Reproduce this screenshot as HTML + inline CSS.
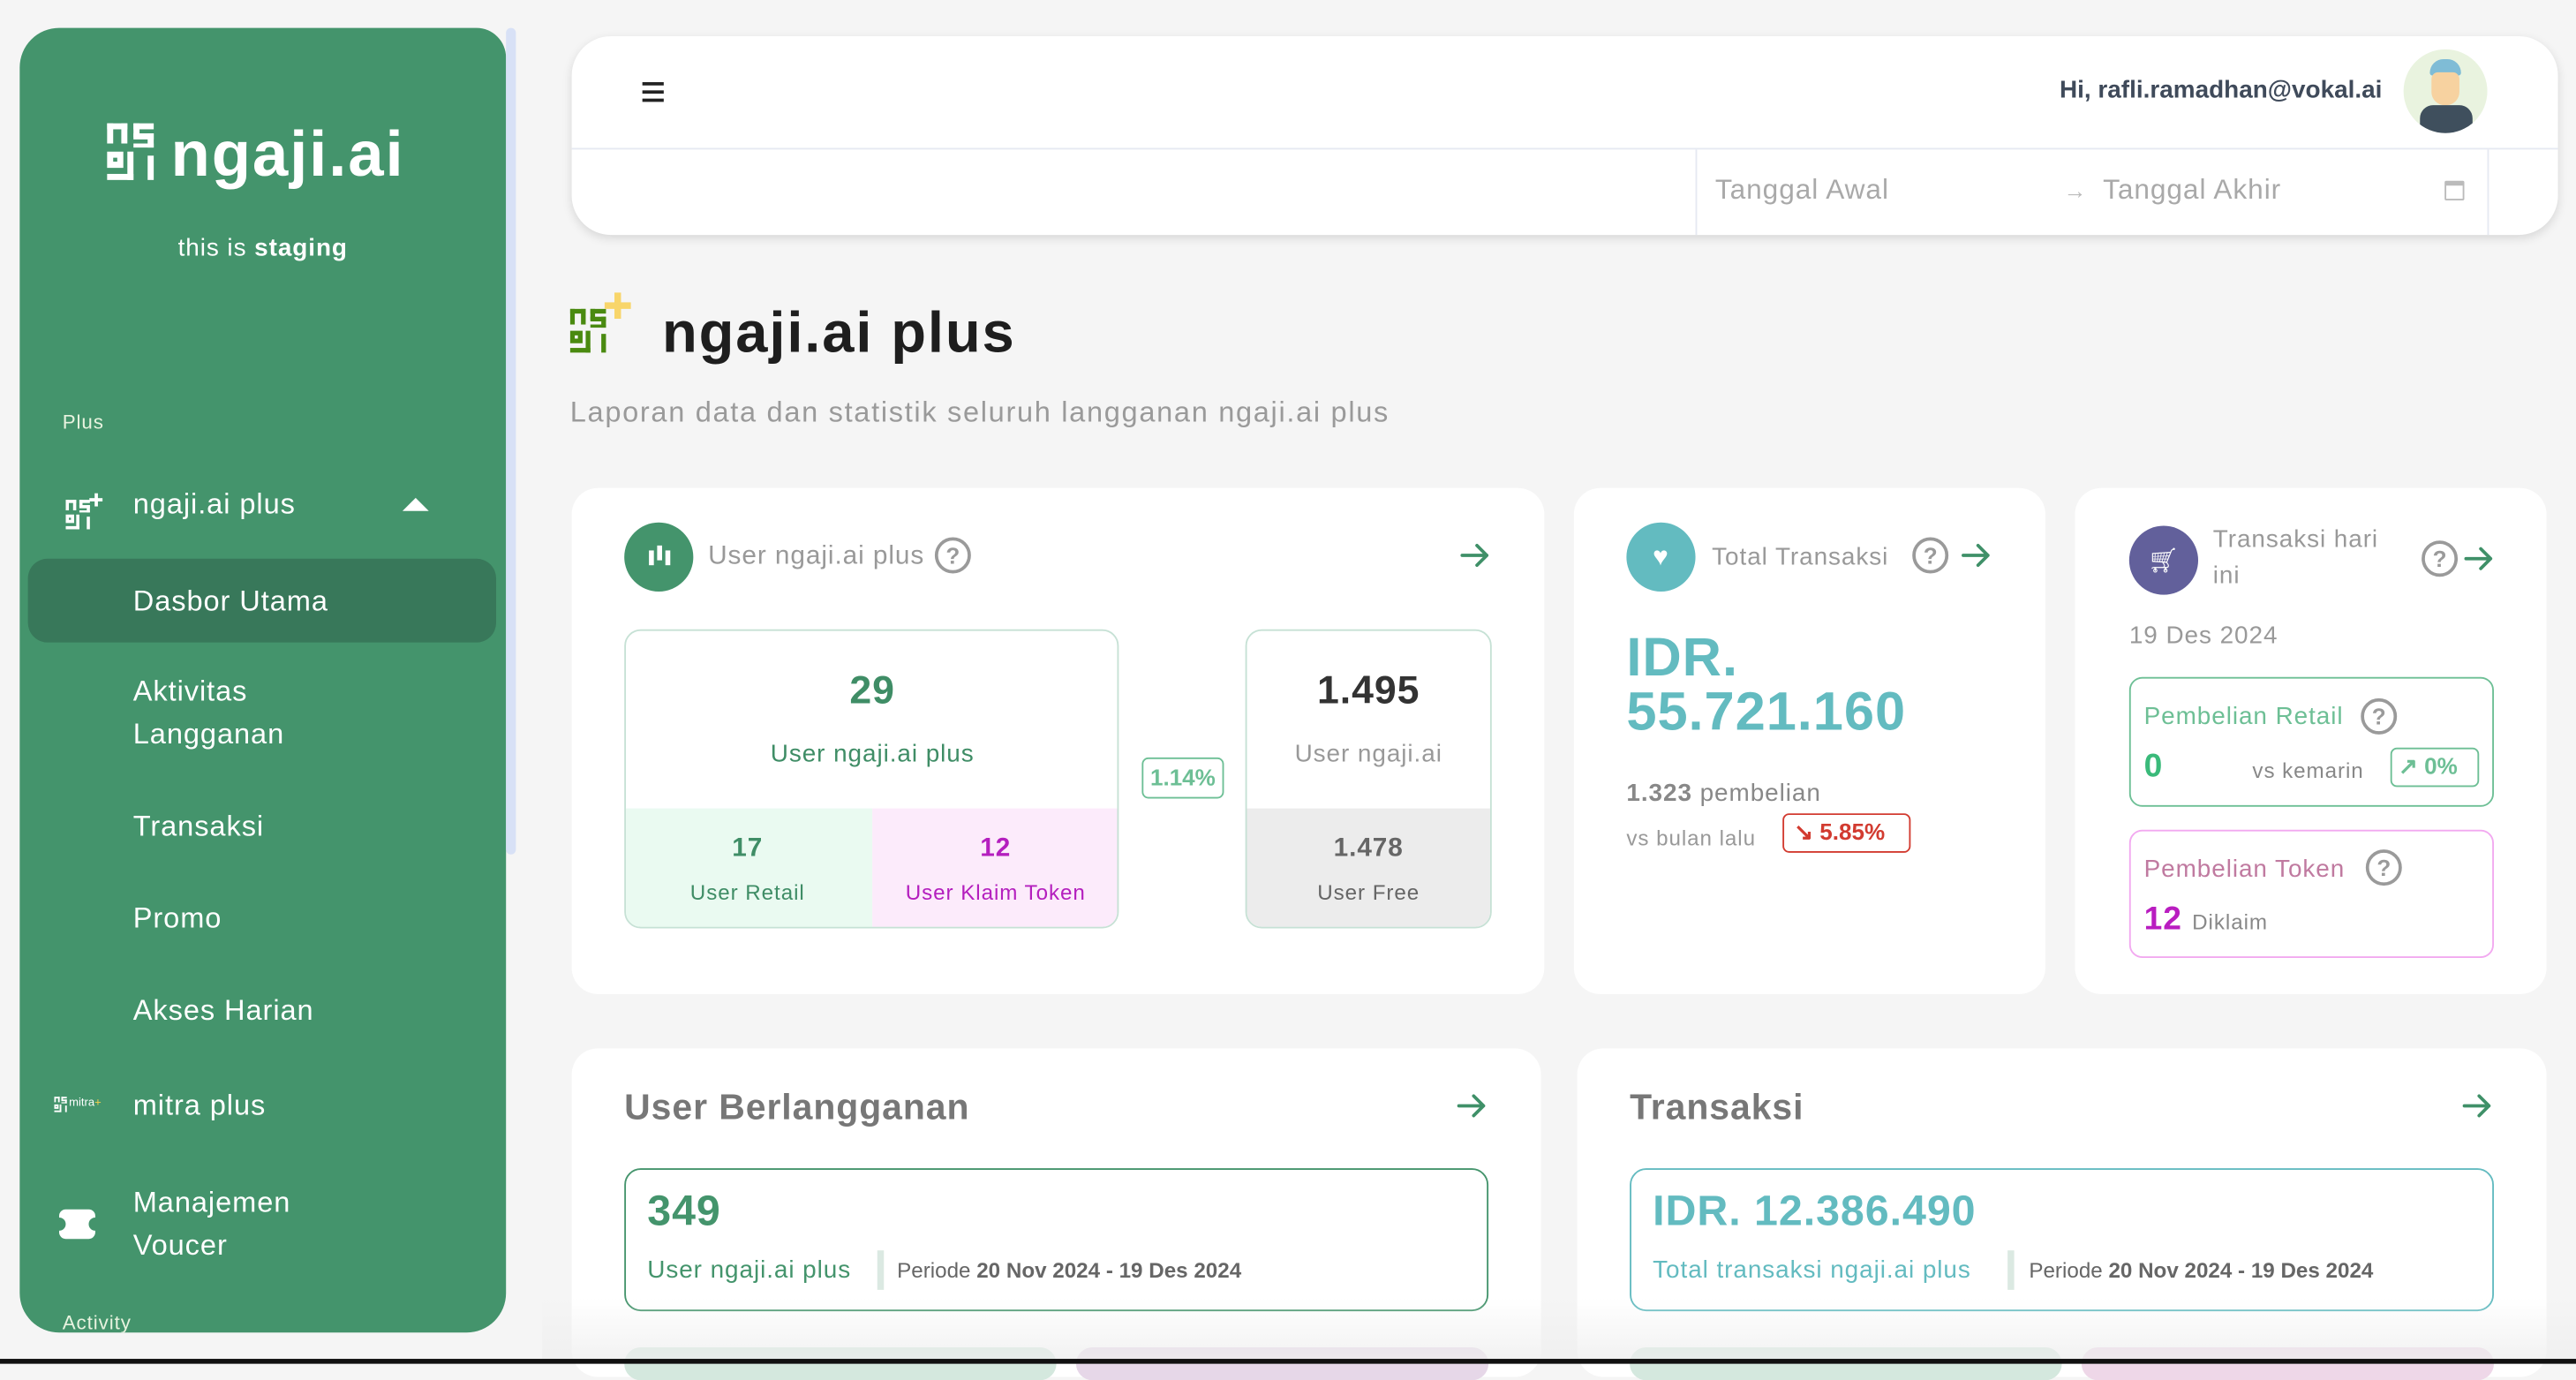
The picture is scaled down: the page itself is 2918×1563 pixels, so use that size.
<!DOCTYPE html>
<html><head><meta charset="utf-8">
<style>
*{margin:0;padding:0;box-sizing:border-box}
html,body{width:2918px;height:1544px;overflow:hidden;background:#f5f5f5}
#w{position:absolute;left:0;top:0;width:1568px;height:830px;transform:scale(1.861);transform-origin:0 0;font-family:"Liberation Sans",sans-serif;background:#f5f5f5;letter-spacing:0.5px}
.a{position:absolute;white-space:nowrap}
.sb{position:absolute;left:12px;top:17px;width:296px;height:794px;background:#44946c;border-radius:24px 18px 24px 24px;overflow:hidden}
.sb .a{color:#fff}
.card{position:absolute;background:#fff;border-radius:16px}
.c{transform:translate(-50%,-50%)}
.m{transform:translateY(-50%)}
.q{position:absolute;width:22px;height:22px;border:2px solid #9a9a9a;border-radius:50%;color:#9a9a9a;font-size:14px;font-weight:bold;text-align:center;line-height:18px;letter-spacing:0}
.arr{position:absolute;width:20px;height:20px}
</style></head><body><div id="w">

<svg width="0" height="0" style="position:absolute"><defs>
<g id="lg"><rect x="0" y="0" width="10" height="3"/><rect x="0" y="0" width="3" height="10"/><rect x="7" y="0" width="3" height="10"/><rect x="13" y="0" width="10" height="3"/><rect x="13" y="0" width="3" height="7"/><rect x="13" y="5" width="10" height="3"/><rect x="20" y="5" width="3" height="7"/><rect x="13" y="10" width="10" height="2"/><path d="M0 14h8v8H0z M3 17v2h2v-2z" fill-rule="evenodd"/><rect x="0" y="25" width="13" height="3"/><rect x="10" y="14" width="3" height="14"/><rect x="20" y="16" width="3" height="12"/></g>
<g id="ar"><path d="M2 10h15 M11 4l6 6-6 6" fill="none" stroke="#3f9068" stroke-width="2" stroke-linecap="round" stroke-linejoin="round"/></g>
</defs></svg>

<div class="sb">
  <svg class="a" style="left:53px;top:58px" width="30" height="37" viewBox="0 0 24 30" fill="#fff"><use href="#lg"/></svg>
  <div class="a" style="left:92px;top:56px;font-size:39px;font-weight:bold;letter-spacing:1px">ngaji.ai</div>
  <div class="a c" style="left:148px;top:134px;font-size:15px">this is <b>staging</b></div>
  <div class="a m" style="left:26px;top:240px;font-size:12px;color:#e8f3df">Plus</div>
  <svg class="a" style="left:28px;top:281px" width="24" height="30" viewBox="0 0 30 32" fill="#fff"><g transform="translate(0,5) scale(0.8)"><use href="#lg"/></g><rect x="22" y="0" width="2.5" height="10"/><rect x="18" y="3.7" width="10" height="2.5"/></svg>
  <div class="a m" style="left:69px;top:290px;font-size:17.5px">ngaji.ai plus</div>
  <div class="a" style="left:233px;top:286px;width:0;height:0;border-left:8px solid transparent;border-right:8px solid transparent;border-bottom:8px solid #fff"></div>
  <div class="a" style="left:5px;top:323px;width:285px;height:51px;background:#38785a;border-radius:12px"></div>
  <div class="a m" style="left:69px;top:349px;font-size:17.5px">Dasbor Utama</div>
  <div class="a m" style="left:69px;top:404px;font-size:17.5px">Aktivitas</div>
  <div class="a m" style="left:69px;top:430px;font-size:17.5px">Langganan</div>
  <div class="a m" style="left:69px;top:486px;font-size:17.5px">Transaksi</div>
  <div class="a m" style="left:69px;top:542px;font-size:17.5px">Promo</div>
  <div class="a m" style="left:69px;top:598px;font-size:17.5px">Akses Harian</div>
  <svg class="a" style="left:21px;top:650px" width="8" height="11" viewBox="0 0 24 30" fill="#fff"><use href="#lg"/></svg>
  <div class="a" style="left:30px;top:651px;font-size:7px;letter-spacing:0">mitra<span style="color:#f6d04d">+</span></div>
  <div class="a m" style="left:69px;top:656px;font-size:17.5px">mitra plus</div>
  <div class="a" style="left:24px;top:719px;width:22px;height:18px;background:#fff;border-radius:4px"></div>
  <div class="a" style="left:20px;top:724px;width:8px;height:8px;background:#44946c;border-radius:50%"></div>
  <div class="a" style="left:42px;top:724px;width:8px;height:8px;background:#44946c;border-radius:50%"></div>
  <div class="a m" style="left:69px;top:715px;font-size:17.5px">Manajemen</div>
  <div class="a m" style="left:69px;top:741px;font-size:17.5px">Voucer</div>
  <div class="a m" style="left:26px;top:788px;font-size:12px;color:#e8f3df">Activity</div>
</div>
<div class="a" style="left:308px;top:17px;width:6px;height:503px;background:#d8e1f6;border-radius:3px"></div>

<div class="card" style="left:348px;top:22px;width:1209px;height:121px;border-radius:24px;box-shadow:0 2px 6px rgba(0,0,0,.12)">
  <div class="a" style="left:43px;top:28px;width:13px;height:1.5px;background:#222;box-shadow:0 5px 0 #222,0 10px 0 #222"></div>
  <div class="a m" style="right:107px;top:33px;font-size:15px;font-weight:bold;color:#3f4a5a;letter-spacing:0">Hi, rafli.ramadhan@vokal.ai</div>
  <div class="a" style="left:1115px;top:8px;width:51px;height:51px;border-radius:50%;background:#e9f3df;overflow:hidden">
    <div class="a" style="left:16px;top:6px;width:19px;height:10px;background:#7fbcd6;border-radius:10px 10px 2px 2px"></div>
    <div class="a" style="left:17px;top:14px;width:17px;height:20px;background:#f7d2a0;border-radius:4px 4px 8px 8px"></div>
    <div class="a" style="left:10px;top:34px;width:32px;height:20px;background:#3f4f5d;border-radius:8px 8px 0 0"></div>
  </div>
  <div class="a" style="left:0;top:68px;width:1209px;height:1px;background:#e6e9f2"></div>
  <div class="a" style="left:684px;top:69px;width:483px;height:52px;border-left:1px solid #e6e9f2;border-right:1px solid #e6e9f2"></div>
  <div class="a m" style="left:696px;top:94px;font-size:17px;color:#a9a9a9">Tanggal Awal</div>
  <div class="a m" style="left:908px;top:94px;font-size:14px;color:#bbb">→</div>
  <div class="a m" style="left:932px;top:94px;font-size:17px;color:#a9a9a9">Tanggal Akhir</div>
  <div class="a" style="left:1140px;top:88px;width:12px;height:12px;border:1.5px solid #bbb;border-top-width:3px;border-radius:1px"></div>
</div>

<svg class="a" style="left:347px;top:178px" width="38" height="52" viewBox="0 0 38 52"><g fill="#4a8a10" transform="translate(0,10) scale(0.95)"><use href="#lg"/></g><rect x="27" y="0" width="4" height="16" fill="#f8d56a"/><rect x="21" y="6" width="16" height="4" fill="#f8d56a"/></svg>
<div class="a m" style="left:403px;top:203px;font-size:35px;font-weight:bold;color:#1e1e1e;letter-spacing:1px">ngaji.ai plus</div>
<div class="a m" style="left:347px;top:251px;font-size:17.5px;color:#9a9a9a;letter-spacing:0.9px">Laporan data dan statistik seluruh langganan ngaji.ai plus</div>

<!-- card 1 -->
<div class="card" style="left:348px;top:297px;width:592px;height:308px">
  <div class="a" style="left:32px;top:21px;width:42px;height:42px;border-radius:50%;background:#44946c"></div>
  <div class="a" style="left:47px;top:38px;width:3px;height:9px;background:#fff;box-shadow:5px -3px 0 #fff,10px 0 0 #fff"></div>
  <div class="a m" style="left:83px;top:42px;font-size:16px;color:#999">User ngaji.ai plus</div>
  <div class="q" style="left:221px;top:30px">?</div>
  <svg class="arr" style="left:540px;top:31px" viewBox="0 0 20 20"><use href="#ar"/></svg>
  <div class="a" style="left:32px;top:86px;width:301px;height:182px;border:1px solid #c6e1d5;border-radius:10px;overflow:hidden">
    <div class="a" style="left:0;top:108px;width:150px;height:74px;background:#eafaf1"></div>
    <div class="a" style="left:150px;top:108px;width:151px;height:74px;background:#fcebfb"></div>
  </div>
  <div class="a c" style="left:183px;top:124px;font-size:24px;font-weight:bold;color:#3f8d66">29</div>
  <div class="a c" style="left:183px;top:162px;font-size:15px;color:#3f8d66">User ngaji.ai plus</div>
  <div class="a c" style="left:107px;top:220px;font-size:16px;font-weight:bold;color:#3f8d66">17</div>
  <div class="a c" style="left:107px;top:246px;font-size:13px;color:#3f8d66">User Retail</div>
  <div class="a c" style="left:258px;top:220px;font-size:16px;font-weight:bold;color:#b41fbe">12</div>
  <div class="a c" style="left:258px;top:246px;font-size:13px;color:#b41fbe">User Klaim Token</div>
  <div class="a" style="left:347px;top:164px;width:50px;height:25px;border:1.5px solid #6dbf95;border-radius:4px;color:#6dbf95;font-size:14px;font-weight:bold;text-align:center;line-height:22px;letter-spacing:0">1.14%</div>
  <div class="a" style="left:410px;top:86px;width:150px;height:182px;border:1px solid #c6e1d5;border-radius:10px;overflow:hidden">
    <div class="a" style="left:0;top:108px;width:150px;height:74px;background:#ececec"></div>
  </div>
  <div class="a c" style="left:485px;top:124px;font-size:24px;font-weight:bold;color:#333">1.495</div>
  <div class="a c" style="left:485px;top:162px;font-size:15px;color:#999">User ngaji.ai</div>
  <div class="a c" style="left:485px;top:220px;font-size:16px;font-weight:bold;color:#666">1.478</div>
  <div class="a c" style="left:485px;top:246px;font-size:13px;color:#666">User Free</div>
</div>

<!-- card 2 -->
<div class="card" style="left:958px;top:297px;width:287px;height:308px">
  <div class="a" style="left:32px;top:21px;width:42px;height:42px;border-radius:50%;background:#63bbc0"></div>
  <div class="a c" style="left:53px;top:43px;font-size:16px;color:#fff">♥</div>
  <div class="a m" style="left:84px;top:42px;font-size:15px;color:#999">Total Transaksi</div>
  <div class="q" style="left:206px;top:30px">?</div>
  <svg class="arr" style="left:235px;top:31px" viewBox="0 0 20 20"><use href="#ar"/></svg>
  <div class="a" style="left:32px;top:86px;font-size:33px;font-weight:bold;color:#63bbc0;line-height:33px">IDR.<br>55.721.160</div>
  <div class="a m" style="left:32px;top:186px;font-size:15px;color:#888"><b>1.323</b> pembelian</div>
  <div class="a m" style="left:32px;top:213px;font-size:13px;color:#999">vs bulan lalu</div>
  <div class="a" style="left:127px;top:198px;width:78px;height:24px;border:1.5px solid #d23b30;border-radius:4px;color:#d23b30;font-size:14px;font-weight:bold;line-height:21px;padding-left:6px;letter-spacing:0">↘ 5.85%</div>
</div>

<!-- card 3 -->
<div class="card" style="left:1263px;top:297px;width:287px;height:308px">
  <div class="a" style="left:33px;top:23px;width:42px;height:42px;border-radius:50%;background:#62609b"></div>
  <div class="a c" style="left:54px;top:44px;font-size:15px;color:#fff">🛒︎</div>
  <div class="a" style="left:84px;top:21px;font-size:15px;color:#999;line-height:22px">Transaksi hari<br>ini</div>
  <div class="q" style="left:211px;top:32px">?</div>
  <svg class="arr" style="left:236px;top:33px" viewBox="0 0 20 20"><use href="#ar"/></svg>
  <div class="a m" style="left:33px;top:90px;font-size:15px;color:#999">19 Des 2024</div>
  <div class="a" style="left:33px;top:115px;width:222px;height:79px;border:1.5px solid #6dbf95;border-radius:8px"></div>
  <div class="a m" style="left:42px;top:139px;font-size:15px;color:#6dbf95">Pembelian Retail</div>
  <div class="q" style="left:174px;top:128px">?</div>
  <div class="a m" style="left:42px;top:170px;font-size:20px;font-weight:bold;color:#3aba7a">0</div>
  <div class="a m" style="left:108px;top:172px;font-size:13px;color:#888">vs kemarin</div>
  <div class="a" style="left:192px;top:158px;width:54px;height:24px;border:1.5px solid #6dbf95;border-radius:4px;color:#6dbf95;font-size:14px;font-weight:bold;line-height:21px;padding-left:4px;letter-spacing:0">↗ 0%</div>
  <div class="a" style="left:33px;top:208px;width:222px;height:78px;border:1.5px solid #f2a9f0;border-radius:8px"></div>
  <div class="a m" style="left:42px;top:232px;font-size:15px;color:#c07aa0">Pembelian Token</div>
  <div class="q" style="left:177px;top:220px">?</div>
  <div class="a m" style="left:42px;top:263px;font-size:20px;font-weight:bold;color:#b91dc0">12 <span style="font-size:13px;font-weight:normal;color:#888">Diklaim</span></div>
</div>

<!-- card 4 -->
<div class="card" style="left:348px;top:638px;width:590px;height:200px">
  <div class="a m" style="left:32px;top:36px;font-size:22px;font-weight:bold;color:#777">User Berlangganan</div>
  <svg class="arr" style="left:538px;top:25px" viewBox="0 0 20 20"><use href="#ar"/></svg>
  <div class="a" style="left:32px;top:73px;width:526px;height:87px;border:1.5px solid #44946c;border-radius:10px"></div>
  <div class="a m" style="left:46px;top:99px;font-size:26px;font-weight:bold;color:#44946c">349</div>
  <div class="a m" style="left:46px;top:135px;font-size:15px;color:#44946c">User ngaji.ai plus</div>
  <div class="a" style="left:186px;top:123px;width:4px;height:24px;background:#dbe9e2"></div>
  <div class="a m" style="left:198px;top:135px;font-size:13px;color:#666;letter-spacing:0">Periode <b>20 Nov 2024 - 19 Des 2024</b></div>
  <div class="a" style="left:32px;top:182px;width:263px;height:20px;background:#d4e8de;border-radius:10px"></div>
  <div class="a" style="left:307px;top:182px;width:251px;height:20px;background:#e6d7e8;border-radius:10px"></div>
</div>

<!-- card 5 -->
<div class="card" style="left:960px;top:638px;width:590px;height:200px">
  <div class="a m" style="left:32px;top:36px;font-size:22px;font-weight:bold;color:#777">Transaksi</div>
  <svg class="arr" style="left:538px;top:25px" viewBox="0 0 20 20"><use href="#ar"/></svg>
  <div class="a" style="left:32px;top:73px;width:526px;height:87px;border:1.5px solid #63bbc0;border-radius:10px"></div>
  <div class="a m" style="left:46px;top:99px;font-size:26px;font-weight:bold;color:#63bbc0">IDR. 12.386.490</div>
  <div class="a m" style="left:46px;top:135px;font-size:15px;color:#63bbc0">Total transaksi ngaji.ai plus</div>
  <div class="a" style="left:262px;top:123px;width:4px;height:24px;background:#dbe9e2"></div>
  <div class="a m" style="left:275px;top:135px;font-size:13px;color:#666;letter-spacing:0">Periode <b>20 Nov 2024 - 19 Des 2024</b></div>
  <div class="a" style="left:32px;top:182px;width:263px;height:20px;background:#d4e8de;border-radius:10px"></div>
  <div class="a" style="left:307px;top:182px;width:251px;height:20px;background:#eed7e8;border-radius:10px"></div>
</div>
<div class="a" style="left:330px;top:790px;width:1238px;height:40px;background:linear-gradient(rgba(245,245,245,0),rgba(238,238,238,.8))"></div>
<div class="a" style="left:0;top:827px;width:1568px;height:3px;background:#111"></div>
</div></body></html>
